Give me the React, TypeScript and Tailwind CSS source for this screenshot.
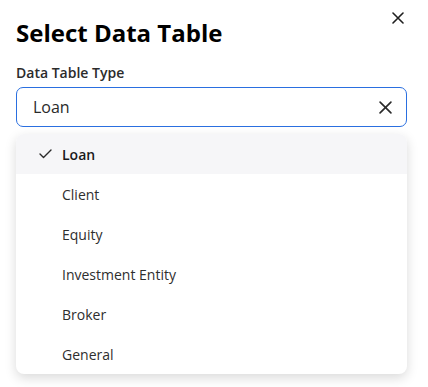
import React from "react";

const items = ["Loan", "Client", "Equity", "Investment Entity", "Broker", "General"];

export default function App() {
  return (
    <div
      className="w-[428px] h-[387px] bg-white relative overflow-hidden text-[#1a1a1a]"
      style={{ fontFamily: '"Open Sans", "Noto Sans", sans-serif' }}
    >
      <button className="absolute left-[391px] top-[11px] w-[14px] h-[14px] flex items-center justify-center">
        <svg width="12" height="12" viewBox="0 0 12 12" fill="none" stroke="#1f1f1f" strokeWidth="1.6" strokeLinecap="round">
          <path d="M1 1L11 11M11 1L1 11" />
        </svg>
      </button>
      <div className="pl-4 pr-[21px] pt-[17px]">
        <h1 className="text-[24px] leading-[32px] font-bold text-black">Select Data Table</h1>
        <div className="mt-[14px] text-[14px] leading-[20px] font-semibold text-[#2b2b2b]">Data Table Type</div>
        <div className="mt-[4px] h-[40px] rounded-[7px] border border-[#2a6fe0] flex items-center pl-[16px] pr-[14px]">
          <span className="flex-1 text-[16px] text-[#2a2a2a]">Loan</span>
          <svg width="13" height="13" viewBox="0 0 12 12" fill="none" stroke="#2a2a2a" strokeWidth="1.5" strokeLinecap="round">
            <path d="M1 1L11 11M11 1L1 11" />
          </svg>
        </div>
        <div className="mt-[7px] rounded-[8px] bg-white shadow-[0_4px_12px_rgba(0,0,0,0.15)] overflow-hidden">
          {items.map((it, i) => (
            <div
              key={it}
              className={`h-[40px] flex items-center text-[14px] ${i === 0 ? "bg-[#f6f6f8] font-semibold text-[#1a1a1a]" : "text-[#2e2e2e]"}`}
            >
              <span className="w-[46px] flex justify-end pr-[10px]">
                {i === 0 && (
                  <svg width="13" height="10" viewBox="0 0 13 10" fill="none" stroke="#2a2a2a" strokeWidth="1.4" strokeLinecap="round" strokeLinejoin="round">
                    <path d="M1 5L4.5 8.5L12 1" />
                  </svg>
                )}
              </span>
              <span>{it}</span>
            </div>
          ))}
        </div>
      </div>
    </div>
  );
}
